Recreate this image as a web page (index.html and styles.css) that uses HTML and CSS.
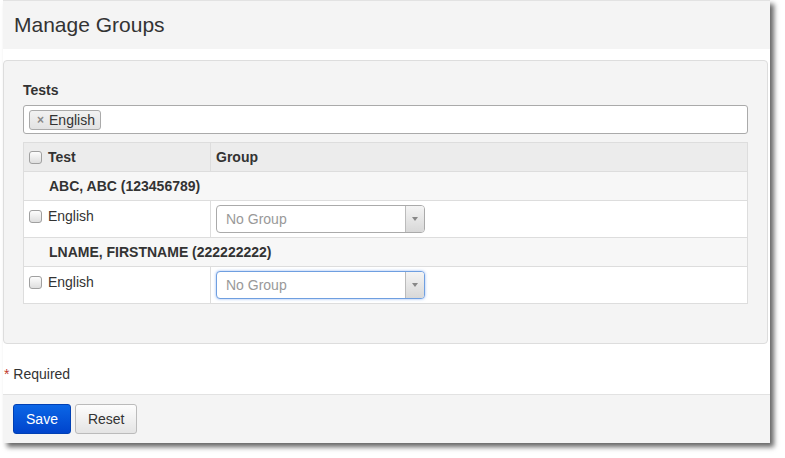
FILE: index.html
```html
<html>
  <head>
    <title>Manage Groups</title>
    <link rel="stylesheet" href="styles.css">
  </head>
  <body>
    <div class="window">
      <div class="page-header">
        <h1>Manage Groups</h1>
      </div>

      <div class="panel">
        <label class="field-label">Tests</label>
        <div class="tag-input">
          <span class="tag"><span class="tag-remove">&times;</span>English</span>
        </div>

        <table class="groups">
          <tr class="head">
            <th class="col-test"><input type="checkbox" class="check"> Test</th>
            <th>Group</th>
          </tr>
          <tr class="student">
            <td colspan="2">ABC, ABC (123456789)</td>
          </tr>
          <tr class="item">
            <td><input type="checkbox" class="check"> English</td>
            <td>
              <div class="select">
                <span class="select-text">No Group</span>
                <span class="select-arrow"></span>
              </div>
            </td>
          </tr>
          <tr class="student">
            <td colspan="2">LNAME, FIRSTNAME (222222222)</td>
          </tr>
          <tr class="item">
            <td><input type="checkbox" class="check"> English</td>
            <td>
              <div class="select focused">
                <span class="select-text">No Group</span>
                <span class="select-arrow"></span>
              </div>
            </td>
          </tr>
        </table>
      </div>

      <div class="required"><span class="star">*</span> Required</div>

      <div class="footer">
        <button class="btn btn-primary">Save</button>
        <button class="btn">Reset</button>
      </div>
    </div>
  </body>
</html>
```

FILE: styles.css
```css
body {
  margin: 0;
  background: #fff;
  font-family: "Liberation Sans", Arial, sans-serif;
  font-size: 14px;
  color: #333;
}
.window {
  margin-left: 3px;
  width: 767px;
  height: 443px;
  background: #fff;
  box-shadow: 4px 4px 5px rgba(0, 0, 0, 0.6);
}
.page-header {
  height: 48px;
  background: #f4f4f4;
  border-top: 1px solid #e2e2e2;
  padding-left: 11px;
  display: flex;
  align-items: center;
}
.page-header h1 {
  margin: 0;
  font-size: 21px;
  font-weight: normal;
  color: #333;
}
.panel {
  margin: 11px 2px 0 0;
  padding: 19px 19px 39px 19px;
  background: #f4f4f4;
  border: 1px solid #ddd;
  border-radius: 4px;
}
.field-label {
  display: block;
  font-weight: bold;
  line-height: 20px;
  margin-bottom: 5px;
}
.tag-input {
  height: 27px;
  background: #fff;
  border: 1px solid #aaa;
  border-radius: 3px;
  padding: 0 5px;
  display: flex;
  align-items: center;
}
.tag {
  display: inline-flex;
  align-items: center;
  height: 18px;
  padding: 0 5px 0 7px;
  border: 1px solid #aaa;
  border-radius: 3px;
  background: linear-gradient(#f2f2f2, #e2e2e2);
  color: #333;
}
.tag-remove {
  color: #888;
  font-weight: bold;
  font-size: 12px;
  margin-right: 5px;
}
.groups {
  width: 100%;
  margin-top: 8px;
  border-collapse: collapse;
  border: 1px solid #ddd;
  font-size: 14px;
  color: #333;
}
.groups th, .groups td {
  border: 1px solid #ddd;
  text-align: left;
  padding: 0 5px;
}
.groups th {
  height: 29px;
  background: #ececec;
  font-weight: bold;
}
.groups .col-test {
  width: 176px;
}
.student td {
  height: 29px;
  background: #f7f7f7;
  font-weight: bold;
  padding-left: 25px;
}
.item td {
  height: 37px;
  vertical-align: top;
  background: #fff;
}
.item td:first-child {
  padding-top: 7px;
}
.check {
  -webkit-appearance: none;
  appearance: none;
  width: 13px;
  height: 13px;
  margin: 0 2px 0 0;
  vertical-align: -2px;
  border: 1px solid #a0a0a0;
  border-radius: 3px;
  background: linear-gradient(#fdfdfd, #dedede);
}
.select {
  margin-top: 4px;
  width: 207px;
  height: 26px;
  border: 1px solid #aaa;
  border-radius: 4px;
  background: #fff;
  display: flex;
  overflow: hidden;
}
.select.focused {
  border-color: #6f9fe0;
  box-shadow: 0 0 3px rgba(82, 140, 236, 0.6);
}
.select-text {
  flex: 1;
  color: #999;
  line-height: 26px;
  padding-left: 9px;
}
.select-arrow {
  width: 18px;
  border-left: 1px solid #bbb;
  background: linear-gradient(#f4f4f4, #d8d8d8);
  position: relative;
}
.select-arrow::after {
  content: "";
  position: absolute;
  left: 6px;
  top: 11px;
  border-left: 3px solid transparent;
  border-right: 3px solid transparent;
  border-top: 4px solid #888;
}
.required {
  line-height: 20px;
  margin: 20px 0 10px 1px;
}
.star {
  color: #c0392b;
}
.footer {
  height: 39px;
  padding: 9px 0 0 10px;
  background: #f4f4f4;
  border-top: 1px solid #e2e2e2;
}
.btn {
  height: 30px;
  padding: 0 12px;
  font-family: "Liberation Sans", Arial, sans-serif;
  font-size: 14px;
  color: #333;
  border: 1px solid #bbb;
  border-radius: 3px;
  background: linear-gradient(#fdfdfd, #e4e4e4);
}
.btn-primary {
  width: 58px;
  color: #fff;
  border-color: #0040b4;
  background: linear-gradient(#0b66e6, #0044cc);
}
```
